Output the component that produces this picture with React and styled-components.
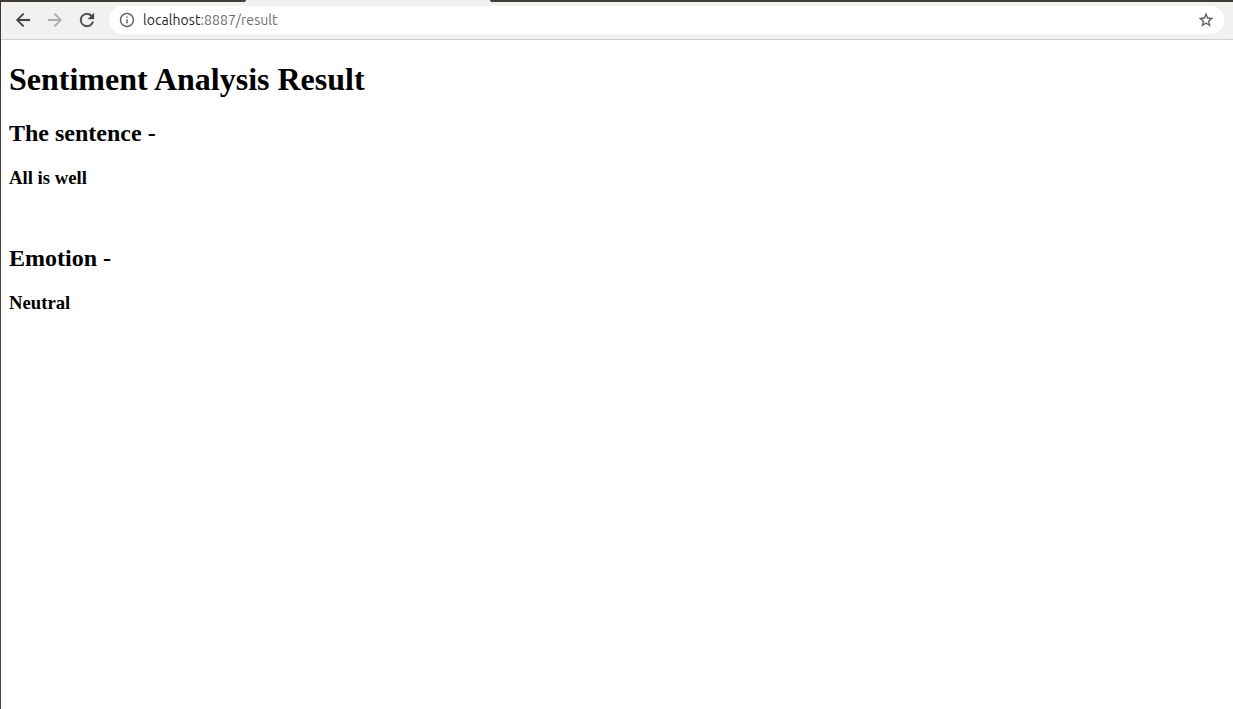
import React from "react";
import styled, { createGlobalStyle } from "styled-components";

const GlobalStyle = createGlobalStyle`
  * { box-sizing: border-box; }
  body { margin: 0; background: #fff; overflow: hidden; }
`;

const Window = styled.div`
  display: flex;
  flex-direction: column;
  height: 709px;
  border-left: 1px solid #50402f;
  border-image: linear-gradient(#3c3630, #54443a 40%, #5b4334) 1;
  border-width: 0 0 0 1px;
  background: #fff;
`;

const TabStrip = styled.div`
  display: flex;
  justify-content: space-between;
  flex: none;
  height: 2px;
  margin-left: -1px;
  background: #f2f1f0;
`;

const InactiveTabs = styled.div`
  width: ${(p) => p.$width}px;
  background: #3f3c35;
  border-radius: ${(p) => (p.$side === "left" ? "0 0 2px 0" : "0 0 0 2px")};
`;

const Toolbar = styled.div`
  display: flex;
  align-items: center;
  flex: none;
  height: 38px;
  padding: 0 9px 1px 6px;
  background: #f2f1f0;
  border-bottom: 1px solid #cfcecd;
`;

const NavButton = styled.button`
  display: flex;
  align-items: center;
  justify-content: center;
  width: 32px;
  height: 32px;
  padding: 0;
  border: 0;
  background: none;
  color: ${(p) => (p.$muted ? "#adacab" : "#474645")};
`;

const AddressBar = styled.div`
  display: flex;
  align-items: center;
  flex: 1;
  height: 28px;
  margin-left: 6px;
  padding: 0 9px;
  border-radius: 14px;
  background: #fff;
  color: #5f6063;
`;

const Url = styled.span`
  flex: 1;
  margin-left: 7px;
  font: 14px/20px Ubuntu, "Noto Sans", sans-serif;
  letter-spacing: 0.06px;
  color: #6b6e72;
`;

const Host = styled.span`
  color: #27282b;
`;

const Icon = styled.svg`
  display: block;
  flex: none;
  width: ${(p) => p.$size}px;
  height: ${(p) => p.$size}px;
  fill: currentColor;
  stroke: currentColor;
  stroke-width: ${(p) => p.$weight || 0};
`;

const Page = styled.main`
  display: flow-root;
  flex: 1;
  padding: 0 8px;
  font-family: "Liberation Serif", "Times New Roman", serif;
  color: #000;
`;

const Title = styled.h1`
  margin: 21px 0 22px;
  font-size: 32px;
  line-height: 37px;
`;

const Heading = styled.h2`
  margin: 20px 0;
  font-size: 24px;
  line-height: 27px;
`;

const Value = styled.h3`
  margin: 19px 0;
  font-size: 18.72px;
  line-height: 21px;
`;

export default function App() {
  return (
    <>
      <GlobalStyle />
      <Window>
        <TabStrip>
          <InactiveTabs $width={246} $side="left" />
          <InactiveTabs $width={743} $side="right" />
        </TabStrip>
        <Toolbar>
          <NavButton aria-label="Back">
            <Icon $size={22} $weight={0.25} viewBox="-0.57 -0.57 25.14 25.14">
              <path d="M20 11H7.83l5.59-5.59L12 4l-8 8 8 8 1.41-1.41L7.83 13H20v-2z" />
            </Icon>
          </NavButton>
          <NavButton aria-label="Forward" $muted>
            <Icon $size={22} $weight={0.25} viewBox="-0.57 -0.57 25.14 25.14">
              <path d="M12 4l-1.41 1.41L16.17 11H4v2h12.17l-5.58 5.59L12 20l8-8z" />
            </Icon>
          </NavButton>
          <NavButton aria-label="Reload">
            <Icon $size={22} $weight={0.25} viewBox="-0.57 -0.57 25.14 25.14">
              <path d="M17.65 6.35A7.96 7.96 0 0 0 12 4a8 8 0 1 0 7.73 10h-2.08A6 6 0 1 1 12 6c1.66 0 3.14.69 4.22 1.78L13 11h7V4l-2.35 2.35z" />
            </Icon>
          </NavButton>
          <AddressBar>
            <Icon $size={18} viewBox="-0.6 -0.6 25.2 25.2">
              <path d="M11 7h2v2h-2zm0 4h2v6h-2zm1-9C6.48 2 2 6.48 2 12s4.48 10 10 10 10-4.48 10-10S17.52 2 12 2zm0 18c-4.41 0-8-3.59-8-8s3.59-8 8-8 8 3.59 8 8-3.59 8-8 8z" />
            </Icon>
            <Url>
              <Host>localhost</Host>:8887/result
            </Url>
            <Icon $size={18} $weight={0.4} viewBox="-0.6 -0.6 25.2 25.2">
              <path d="M22 9.24l-7.19-.62L12 2 9.19 8.63 2 9.24l5.46 4.73L5.82 21 12 17.27 18.18 21l-1.63-7.03L22 9.24zM12 15.4l-3.76 2.27 1-4.28-3.32-2.88 4.38-.38L12 6.1l1.71 4.04 4.38.38-3.32 2.88 1 4.28L12 15.4z" />
            </Icon>
          </AddressBar>
        </Toolbar>
        <Page>
          <Title>Sentiment Analysis Result</Title>
          <Heading>The sentence -</Heading>
          <Value>All is well</Value>
          <br />
          <Heading>Emotion -</Heading>
          <Value>Neutral</Value>
        </Page>
      </Window>
    </>
  );
}
